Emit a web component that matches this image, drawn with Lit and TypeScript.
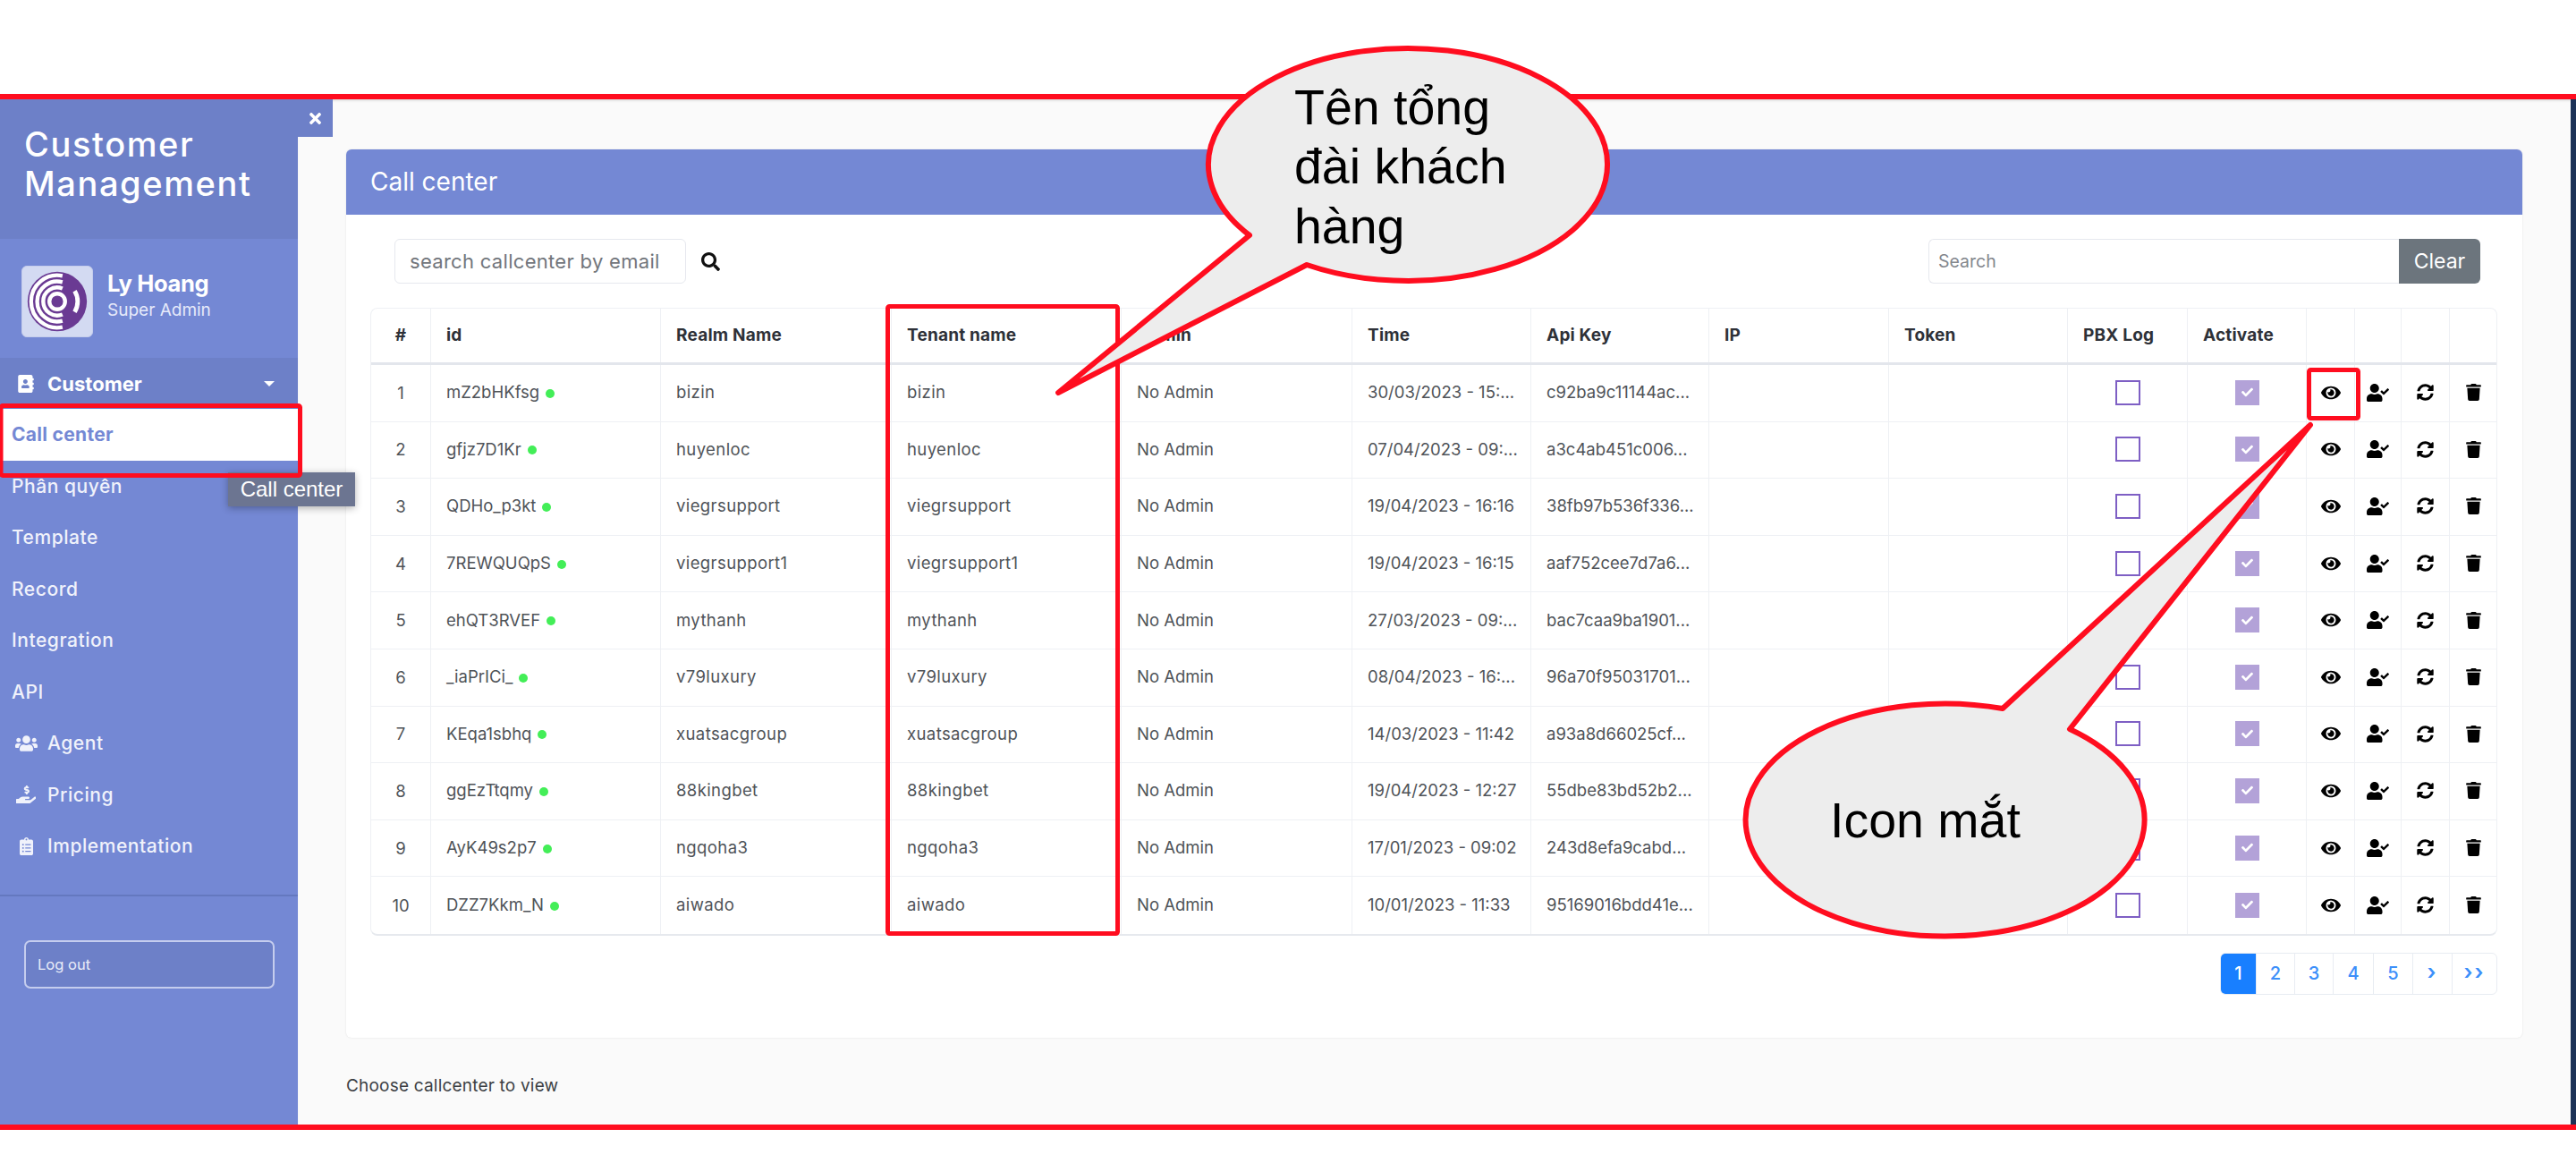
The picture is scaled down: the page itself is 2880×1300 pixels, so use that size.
import { LitElement, html, css, svg } from "lit";
import { customElement } from "lit/decorators.js";

const ICONS: Record<string, [number, string]> = {
  eye: [576, "M572.52 241.4C518.29 135.59 410.93 64 288 64S57.68 135.64 3.48 241.41a32.35 32.35 0 0 0 0 29.19C57.71 376.41 165.07 448 288 448s230.32-71.64 284.52-177.41a32.35 32.35 0 0 0 0-29.19zM288 400a144 144 0 1 1 144-144 143.93 143.93 0 0 1-144 144zm0-240a95.31 95.31 0 0 0-25.31 3.79 47.85 47.85 0 0 1-66.9 66.9A95.78 95.78 0 1 0 288 160z"],
  userCheck: [640, "M224 256c70.7 0 128-57.3 128-128S294.7 0 224 0 96 57.3 96 128s57.3 128 128 128zm89.6 32h-16.7c-22.2 10.2-46.9 16-72.9 16s-50.6-5.8-72.9-16h-16.7C60.2 288 0 348.2 0 422.4V464c0 26.5 21.5 48 48 48h352c26.5 0 48-21.5 48-48v-41.6c0-74.2-60.2-134.4-134.4-134.4zm323-128.4l-27.8-28.1c-4.6-4.7-12.1-4.7-16.8-.1l-104.8 104-45.5-45.8c-4.6-4.7-12.1-4.7-16.8-.1l-28.1 27.9c-4.7 4.6-4.7 12.1-.1 16.8l81.7 82.3c4.6 4.7 12.1 4.7 16.8.1l141.3-140.2c4.6-4.7 4.7-12.2.1-16.8z"],
  sync: [512, "M370.72 133.28C339.458 104.008 298.888 87.962 255.848 88c-77.458.068-144.328 53.178-162.791 126.85-1.344 5.363-6.122 9.15-11.651 9.15H24.103c-7.498 0-13.194-6.807-11.807-14.176C33.933 94.924 134.813 8 256 8c66.448 0 126.791 26.136 171.315 68.685L463.03 40.97C478.149 25.851 504 36.559 504 57.941V192c0 13.255-10.745 24-24 24H345.941c-21.382 0-32.09-25.851-16.971-40.971l41.75-41.749zM32 296h134.059c21.382 0 32.09 25.851 16.971 40.971l-41.75 41.75c31.262 29.273 71.835 45.319 114.876 45.28 77.418-.07 144.315-53.144 162.787-126.849 1.344-5.363 6.122-9.15 11.651-9.15h57.304c7.498 0 13.194 6.807 11.807 14.176C478.067 417.076 377.187 504 256 504c-66.448 0-126.791-26.136-171.315-68.685L48.97 471.03C33.851 486.149 8 475.441 8 454.059V320c0-13.255 10.745-24 24-24z"],
  trash: [448, "M432 32H312l-9.4-18.7A24 24 0 0 0 281.1 0H166.8a23.72 23.72 0 0 0-21.4 13.3L136 32H16A16 16 0 0 0 0 48v32a16 16 0 0 0 16 16h416a16 16 0 0 0 16-16V48a16 16 0 0 0-16-16zM53.2 467a48 48 0 0 0 47.9 45h245.8a48 48 0 0 0 47.9-45L416 128H32z"],
  search: [512, "M505 442.7L405.3 343c-4.5-4.5-10.6-7-17-7H372c27.6-35.3 44-79.7 44-128C416 93.1 322.9 0 208 0S0 93.1 0 208s93.1 208 208 208c48.3 0 92.7-16.4 128-44v16.3c0 6.4 2.5 12.5 7 17l99.7 99.7c9.4 9.4 24.6 9.4 33.9 0l28.3-28.3c9.4-9.4 9.4-24.6.1-34zM208 336c-70.7 0-128-57.2-128-128 0-70.7 57.2-128 128-128 70.7 0 128 57.2 128 128 0 70.7-57.2 128-128 128z"],
  times: [352, "M242.72 256l100.07-100.07c12.28-12.28 12.28-32.19 0-44.48l-22.24-22.24c-12.28-12.28-32.19-12.28-44.48 0L176 189.28 75.93 89.21c-12.28-12.28-32.19-12.28-44.48 0L9.21 111.45c-12.28 12.28-12.28 32.19 0 44.48L109.28 256 9.21 356.07c-12.28 12.28-12.28 32.19 0 44.48l22.24 22.24c12.28 12.28 32.2 12.28 44.48 0L176 322.72l100.07 100.07c12.28 12.28 32.2 12.28 44.48 0l22.24-22.24c12.28-12.28 12.28-32.19 0-44.48L242.72 256z"],
  book: [448, "M436 160c6.6 0 12-5.4 12-12v-40c0-6.6-5.4-12-12-12h-20V48c0-26.5-21.5-48-48-48H48C21.5 0 0 21.5 0 48v416c0 26.5 21.5 48 48 48h320c26.5 0 48-21.5 48-48v-48h20c6.6 0 12-5.4 12-12v-40c0-6.6-5.4-12-12-12h-20v-64h20c6.6 0 12-5.4 12-12v-40c0-6.6-5.4-12-12-12h-20v-64h20zm-228-32c35.3 0 64 28.7 64 64s-28.7 64-64 64-64-28.7-64-64 28.7-64 64-64zm112 236.8c0 10.6-10 19.2-22.4 19.2H118.4C106 384 96 375.4 96 364.8v-19.2c0-31.8 30.1-57.6 67.2-57.6h5c12.3 5.1 25.7 8 39.8 8s27.6-2.9 39.8-8h5c37.1 0 67.2 25.8 67.2 57.6v19.2z"],
  users: [640, "M96 224c35.3 0 64-28.7 64-64s-28.7-64-64-64-64 28.7-64 64 28.7 64 64 64zm448 0c35.3 0 64-28.7 64-64s-28.7-64-64-64-64 28.7-64 64 28.7 64 64 64zm32 32h-64c-17.6 0-33.5 7.1-45.1 18.6 40.3 22.1 68.9 62 75.1 109.4h66c17.7 0 32-14.3 32-32v-32c0-35.3-28.7-64-64-64zm-256 0c61.9 0 112-50.1 112-112S381.9 32 320 32 208 82.1 208 144s50.1 112 112 112zm76.8 32h-8.3c-20.8 10-43.9 16-68.5 16s-47.6-6-68.5-16h-8.3C179.6 288 128 339.6 128 403.2V432c0 26.5 21.5 48 48 48h288c26.5 0 48-21.5 48-48v-28.8c0-63.6-51.6-115.2-115.2-115.2zm-223.7-13.4C161.5 263.1 145.6 256 128 256H64c-35.3 0-64 28.7-64 64v32c0 17.7 14.3 32 32 32h65.9c6.3-47.4 34.9-87.3 75.2-109.4z"],
  hand: [576, "M271.06,144.3l54.27,14.3a8.59,8.59,0,0,1,6.63,8.1c0,4.6-4.09,8.4-9.12,8.4h-35.6a30,30,0,0,1-11.19-2.2c-5.24-2.2-11.28-1.7-15.3,2l-19,17.5a11.68,11.68,0,0,0-2.25,2.66,11.42,11.42,0,0,0,3.88,15.74,83.77,83.77,0,0,0,34.51,11.5V240c0,8.8,7.83,16,17.37,16h17.37c9.55,0,17.38-7.2,17.38-16V222.4c32.93-3.6,57.84-31,53.5-63-3.15-23-22.46-41.3-46.56-47.7L282.68,97.4a8.59,8.59,0,0,1-6.63-8.1c0-4.6,4.09-8.4,9.12-8.4h35.6A30,30,0,0,1,332,83.1c5.23,2.2,11.28,1.7,15.3-2l19-17.5A11.31,11.31,0,0,0,368.47,61a11.43,11.43,0,0,0-3.84-15.78,83.82,83.82,0,0,0-34.52-11.5V16c0-8.8-7.82-16-17.37-16H295.37C285.82,0,278,7.2,278,16V33.6c-32.89,3.6-57.85,31-53.51,63C227.63,119.6,247,137.9,271.06,144.3ZM565.27,328.1c-11.8-10.7-30.2-10-42.6,0L430.27,402a63.64,63.64,0,0,1-40,14H272a16,16,0,0,1,0-32h78.29c15.9,0,30.71-10.9,33.25-26.6a31.2,31.2,0,0,0,.46-5.46A32,32,0,0,0,352,320H192a117.66,117.66,0,0,0-74.1,26.29L71.4,384H16A16,16,0,0,0,0,400v96a16,16,0,0,0,16,16H372.77a64,64,0,0,0,40-14L564,377a32,32,0,0,0,1.27-48.9Z"],
  clipboard: [384, "M336 64h-80c0-35.3-28.7-64-64-64s-64 28.7-64 64H48C21.5 64 0 85.5 0 112v352c0 26.5 21.5 48 48 48h288c26.5 0 48-21.5 48-48V112c0-26.5-21.5-48-48-48zM96 424c-13.3 0-24-10.7-24-24s10.7-24 24-24 24 10.7 24 24-10.7 24-24 24zm0-96c-13.3 0-24-10.7-24-24s10.7-24 24-24 24 10.7 24 24-10.7 24-24 24zm0-96c-13.3 0-24-10.7-24-24s10.7-24 24-24 24 10.7 24 24-10.7 24-24 24zm96-192c13.3 0 24 10.7 24 24s-10.7 24-24 24-24-10.7-24-24 10.7-24 24-24zm128 368c0 4.4-3.6 8-8 8H168c-4.4 0-8-3.6-8-8v-16c0-4.4 3.6-8 8-8h144c4.4 0 8 3.6 8 8v16zm0-96c0 4.4-3.6 8-8 8H168c-4.4 0-8-3.6-8-8v-16c0-4.4 3.6-8 8-8h144c4.4 0 8 3.6 8 8v16zm0-96c0 4.4-3.6 8-8 8H168c-4.4 0-8-3.6-8-8v-16c0-4.4 3.6-8 8-8h144c4.4 0 8 3.6 8 8v16z"],
  check: [512, "M173.898 439.404l-166.4-166.4c-9.997-9.997-9.997-26.206 0-36.204l36.203-36.204c9.997-9.998 26.207-9.998 36.204 0L192 312.69 432.095 72.596c9.997-9.997 26.207-9.997 36.204 0l36.203 36.204c9.997 9.997 9.997 26.206 0 36.204l-294.4 294.401c-9.998 9.997-26.207 9.997-36.204-.001z"],
};

function icon(name: string, cls: string) {
  const [w, d] = ICONS[name];
  return html`<svg class="${cls}" viewBox="0 0 ${w} 512" fill="currentColor"><path d="${d}"></path></svg>`;
}

const ROWS = [
  ["mZ2bHKfsg", "bizin", "30/03/2023 - 15:...", "c92ba9c11144ac..."],
  ["gfjz7D1Kr", "huyenloc", "07/04/2023 - 09:...", "a3c4ab451c006..."],
  ["QDHo_p3kt", "viegrsupport", "19/04/2023 - 16:16", "38fb97b536f336..."],
  ["7REWQUQpS", "viegrsupport1", "19/04/2023 - 16:15", "aaf752cee7d7a6..."],
  ["ehQT3RVEF", "mythanh", "27/03/2023 - 09:...", "bac7caa9ba1901..."],
  ["_iaPrICi_", "v79luxury", "08/04/2023 - 16:...", "96a70f95031701..."],
  ["KEqa1sbhq", "xuatsacgroup", "14/03/2023 - 11:42", "a93a8d66025cf..."],
  ["ggEzTtqmy", "88kingbet", "19/04/2023 - 12:27", "55dbe83bd52b2..."],
  ["AyK49s2p7", "ngqoha3", "17/01/2023 - 09:02", "243d8efa9cabd..."],
  ["DZZ7Kkm_N", "aiwado", "10/01/2023 - 11:33", "95169016bdd41e..."],
];

const HEADS = ["#", "id", "Realm Name", "Tenant name", "Admin", "Time", "Api Key", "IP", "Token", "PBX Log", "Activate", "", "", "", ""];

@customElement("app-root")
export class AppRoot extends LitElement {
  static styles = css`
    :host {
      display: block;
      position: relative;
      width: 2880px;
      height: 1300px;
      overflow: hidden;
      background: #fff;
      font-family: Inter, "Noto Sans", sans-serif;
    }
    * {
      box-sizing: border-box;
    }
    .frame {
      margin-top: 105px;
      height: 1158px;
      border-top: 6px solid #ff0d1f;
      border-bottom: 6px solid #ff0d1f;
      display: flex;
    }

    /* sidebar */
    .side {
      position: relative;
      width: 333px;
      flex: none;
      background: #7488d4;
      color: #fff;
    }
    .close {
      position: absolute;
      left: 100%;
      top: 0;
      width: 39px;
      height: 42px;
      background: #6d80c8;
      display: flex;
      align-items: center;
      justify-content: center;
    }
    .close svg {
      width: 13px;
      height: 19px;
    }
    .brand {
      height: 156px;
      background: #6d80c8;
      padding: 28px 0 0 27px;
      font-size: 38px;
      line-height: 44px;
      font-weight: 500;
      letter-spacing: 1.6px;
    }
    .user {
      height: 133px;
      padding: 30px 0 0 24px;
      display: flex;
      gap: 16px;
    }
    .avatar {
      width: 80px;
      height: 80px;
      border-radius: 6px;
      background: #d3daf2;
      border: 1px solid #c5cdec;
    }
    .who {
      padding-top: 3px;
    }
    .who b {
      display: block;
      font-size: 25.5px;
      line-height: 34px;
      font-weight: 700;
      letter-spacing: -0.3px;
    }
    .who span {
      display: block;
      font-size: 19px;
      line-height: 26px;
      color: #e6eafa;
    }
    .group {
      height: 57px;
      background: #6d80c8;
      display: flex;
      align-items: center;
      font-size: 22px;
      font-weight: 700;
      padding-left: 20px;
    }
    .group .ic {
      width: 18px;
      height: 20px;
      margin-right: 15px;
    }
    .caret {
      margin-left: 136px;
      width: 0;
      height: 0;
      border-left: 6px solid transparent;
      border-right: 6px solid transparent;
      border-top: 6px solid #fff;
    }
    .nav {
      display: grid;
      grid-auto-rows: 57.5px;
    }
    .item {
      display: flex;
      align-items: center;
      padding-left: 13px;
      font-size: 21px;
      font-weight: 500;
      letter-spacing: 0.55px;
      color: #f0f2fb;
    }
    .item.on {
      background: #fff;
      color: #7488d4;
      font-weight: 700;
      letter-spacing: 0.3px;
    }
    .item .slot {
      width: 40px;
      padding-right: 8px;
      display: flex;
      justify-content: center;
    }
    .item .slot svg {
      height: 20px;
    }
    .rule {
      margin-top: 25px;
      border-top: 2px solid #6478bf;
    }
    .logout {
      margin: 49px 0 0 27px;
      width: 280px;
      height: 54px;
      border: 2px solid #c5cdee;
      border-radius: 7px;
      background: #6d80c8;
      display: flex;
      align-items: center;
      padding-left: 13px;
      font-size: 16.5px;
      color: #e9ecf8;
    }
    .tip {
      position: absolute;
      left: 255px;
      top: 417px;
      width: 142px;
      height: 38px;
      background: #6c7591;
      box-shadow: 0 2px 8px rgba(0, 0, 0, 0.3);
      color: #fff;
      font-family: "Liberation Sans", Arial, sans-serif;
      font-size: 24px;
      display: flex;
      align-items: center;
      justify-content: center;
    }

    /* main */
    .main {
      flex: 1;
      background: #fafafa;
      padding: 56px 54px 0;
      box-shadow: inset 0 3px 3px -2px #ccc;
    }
    .strip {
      width: 6px;
      flex: none;
      background: #1c3257;
    }
    .card {
      height: 993px;
      background: #fff;
      border-radius: 6px;
      box-shadow: 0 0 2px #ddd;
      overflow: hidden;
    }
    .head {
      height: 73px;
      background: #7488d4;
      color: #fff;
      display: flex;
      align-items: center;
      padding: 0 0 2px 27px;
      font-size: 28px;
    }
    .tools {
      display: flex;
      align-items: center;
      margin: 27px 47px 0 54px;
      height: 50px;
    }
    .email {
      width: 326px;
      height: 50px;
      border: 1.5px solid #e6e8ee;
      border-radius: 6px;
      display: flex;
      align-items: center;
      padding-left: 16px;
      font-size: 22px;
      letter-spacing: 0.3px;
      color: #72767c;
      white-space: nowrap;
    }
    .find {
      width: 21px;
      height: 21px;
      margin-left: 17px;
      color: #111;
    }
    .filter {
      margin-left: auto;
      width: 526px;
      height: 50px;
      border: 1.5px solid #e6e8ee;
      border-right: 0;
      border-radius: 6px 0 0 6px;
      display: flex;
      align-items: center;
      padding-left: 10px;
      font-size: 19.5px;
      color: #83878d;
    }
    .clear {
      width: 91px;
      height: 50px;
      background: #6c757d;
      border-radius: 0 6px 6px 0;
      color: #fff;
      font-size: 23px;
      display: flex;
      align-items: center;
      justify-content: center;
    }
    .table {
      margin: 27px 28px 0 27px;
      border: 1px solid #eef0f4;
      border-bottom: 2px solid #e6e9ee;
      border-radius: 8px;
      font-size: 18.5px;
      color: #4f5358;
    }
    .row {
      display: grid;
      grid-template-columns: 67px 257px 258px 257px 258px 200px 199px 201px 200px 134px 133px 54px 52px 54px 1fr;
      height: 63.6px;
      border-bottom: 1px solid #eef0f4;
    }
    .row.last {
      border-bottom: 0;
    }
    .row.top {
      height: 63px;
      border-bottom: 3px solid #e3e6ec;
      color: #2e3138;
      font-weight: 700;
      font-size: 19px;
      letter-spacing: 0.2px;
    }
    .c {
      display: flex;
      align-items: center;
      padding: 0 0 2px 17px;
      border-right: 1px solid #eef0f4;
      white-space: nowrap;
      overflow: hidden;
      color: inherit;
    }
    .c:last-child {
      border-right: 0;
    }
    .c.mid {
      justify-content: center;
      padding: 0 0 1px;
    }
    .c.name {
      letter-spacing: 0.4px;
    }
    .dot {
      width: 10px;
      height: 10px;
      border-radius: 50%;
      background: #43ee57;
      margin: 3px 0 0 7px;
    }
    .box {
      width: 28px;
      height: 28px;
      border: 2.5px solid #7e5fc4;
    }
    .tick {
      width: 27px;
      height: 28px;
      background: #b3a2d8;
      color: #fff;
      display: flex;
      align-items: center;
      justify-content: center;
    }
    .tick svg {
      width: 13px;
    }
    .act {
      color: #000;
    }
    .eye {
      width: 22px;
      height: 20px;
    }
    .uc {
      width: 25px;
      height: 20px;
    }
    .sy {
      width: 19px;
      height: 19px;
    }
    .tr {
      width: 17px;
      height: 19px;
    }
    .pager {
      margin: 19px 28px 0 auto;
      width: 310px;
      height: 47px;
      display: grid;
      grid-template-columns: 40px 43px 43px 45px 44px 44px 1fr;
      border: 1px solid #e8ecf2;
      border-radius: 6px;
      overflow: hidden;
      color: #3c8ffa;
      font-size: 20px;
      font-weight: 500;
    }
    .pager span {
      display: flex;
      align-items: center;
      justify-content: center;
      border-right: 1px solid #e8ecf2;
    }
    .pager span:last-child {
      border-right: 0;
    }
    .pager .now {
      background: #187fff;
      color: #fff;
    }
    .pager .arrow {
      font-size: 24px;
      font-weight: 600;
      letter-spacing: 2px;
      padding-bottom: 4px;
    }
    .foot {
      margin-top: 39px;
      font-size: 19px;
      line-height: 30px;
      letter-spacing: 0.2px;
      color: #3c3f44;
    }

    /* annotations */
    .notes {
      position: absolute;
      left: 0;
      top: 0;
      width: 2880px;
      height: 1300px;
      pointer-events: none;
    }
    .red {
      fill: none;
      stroke: #ff0d1f;
      stroke-width: 5;
      stroke-linejoin: round;
    }
    .bubble {
      fill: #ededed;
      stroke: #ff0d1f;
      stroke-width: 6;
      stroke-linejoin: round;
    }
    .say {
      font-family: "Liberation Sans", Arial, sans-serif;
      font-size: 55.5px;
      fill: #000;
    }
  `;

  logo() {
    return html`<svg class="avatar" viewBox="0 0 80 80">
      <circle cx="40" cy="40" r="34" fill="#6a3a93"></circle>
      <g fill="none" stroke="#fff" stroke-width="4.5">
        <circle cx="40" cy="40" r="9"></circle>
        <path d="M46 25.2a16 16 0 1 0 0 29.6"></path>
        <path d="M46 17.8a23 23 0 1 0 0 44.4"></path>
        <path d="M46 10.6a30 30 0 1 0 0 58.8"></path>
        <path d="M60 28a23 23 0 0 1 0 24" stroke-width="5"></path>
      </g>
    </svg>`;
  }

  notes() {
    return svg`
      <rect class="red" x="1" y="453.5" width="334.5" height="78" rx="2"></rect>
      <rect class="red" x="992.5" y="342.5" width="257" height="701" rx="2"></rect>
      <rect class="red" x="2581.5" y="413.5" width="55" height="54" rx="2"></rect>
      <path class="bubble" d="M1183 439L1397 263A223 130 0 1 1 1461 296Z"></path>
      <path class="bubble" d="M2583 475L2314 815A223 130 0 1 1 2239 792Z"></path>
      <text class="say" x="1447" y="139">Tên tổng</text>
      <text class="say" x="1447" y="205">đài khách</text>
      <text class="say" x="1447" y="272">hàng</text>
      <text class="say" x="2046" y="936">Icon mắt</text>
    `;
  }

  render() {
    const nav = ["Phân quyền", "Template", "Record", "Integration", "API"];
    return html`
      <div class="frame">
        <aside class="side">
          <div class="close">${icon("times", "")}</div>
          <div class="brand">Customer<br />Management</div>
          <div class="user">
            ${this.logo()}
            <div class="who"><b>Ly Hoang</b><span>Super Admin</span></div>
          </div>
          <div class="group">${icon("book", "ic")}Customer<i class="caret"></i></div>
          <div class="nav">
            <div class="item on">Call center</div>
            ${nav.map((n) => html`<div class="item">${n}</div>`)}
            <div class="item"><span class="slot">${icon("users", "")}</span>Agent</div>
            <div class="item"><span class="slot">${icon("hand", "")}</span>Pricing</div>
            <div class="item"><span class="slot">${icon("clipboard", "")}</span>Implementation</div>
          </div>
          <div class="rule"></div>
          <div class="logout">Log out</div>
          <div class="tip">Call center</div>
        </aside>
        <main class="main">
          <section class="card">
            <div class="head">Call center</div>
            <div class="tools">
              <div class="email">search callcenter by email</div>
              ${icon("search", "find")}
              <div class="filter">Search</div>
              <div class="clear">Clear</div>
            </div>
            <div class="table">
              <div class="row top">
                ${HEADS.map((h, i) => html`<div class="c ${i === 0 ? "mid" : ""}">${h}</div>`)}
              </div>
              ${ROWS.map(
                (r, i) => html`<div class="row ${i === ROWS.length - 1 ? "last" : ""}">
                  <div class="c mid">${i + 1}</div>
                  <div class="c">${r[0]}<i class="dot"></i></div>
                  <div class="c name">${r[1]}</div>
                  <div class="c name">${r[1]}</div>
                  <div class="c">No Admin</div>
                  <div class="c">${r[2]}</div>
                  <div class="c">${r[3]}</div>
                  <div class="c"></div>
                  <div class="c"></div>
                  <div class="c mid"><div class="box"></div></div>
                  <div class="c mid"><div class="tick">${icon("check", "")}</div></div>
                  <div class="c mid act">${icon("eye", "eye")}</div>
                  <div class="c mid act">${icon("userCheck", "uc")}</div>
                  <div class="c mid act">${icon("sync", "sy")}</div>
                  <div class="c mid act">${icon("trash", "tr")}</div>
                </div>`
              )}
            </div>
            <div class="pager">
              <span class="now">1</span><span>2</span><span>3</span><span>4</span><span>5</span><span class="arrow">›</span><span class="arrow">››</span>
            </div>
          </section>
          <div class="foot">Choose callcenter to view</div>
        </main>
        <div class="strip"></div>
      </div>
      <svg class="notes" viewBox="0 0 2880 1300">${this.notes()}</svg>
    `;
  }
}
